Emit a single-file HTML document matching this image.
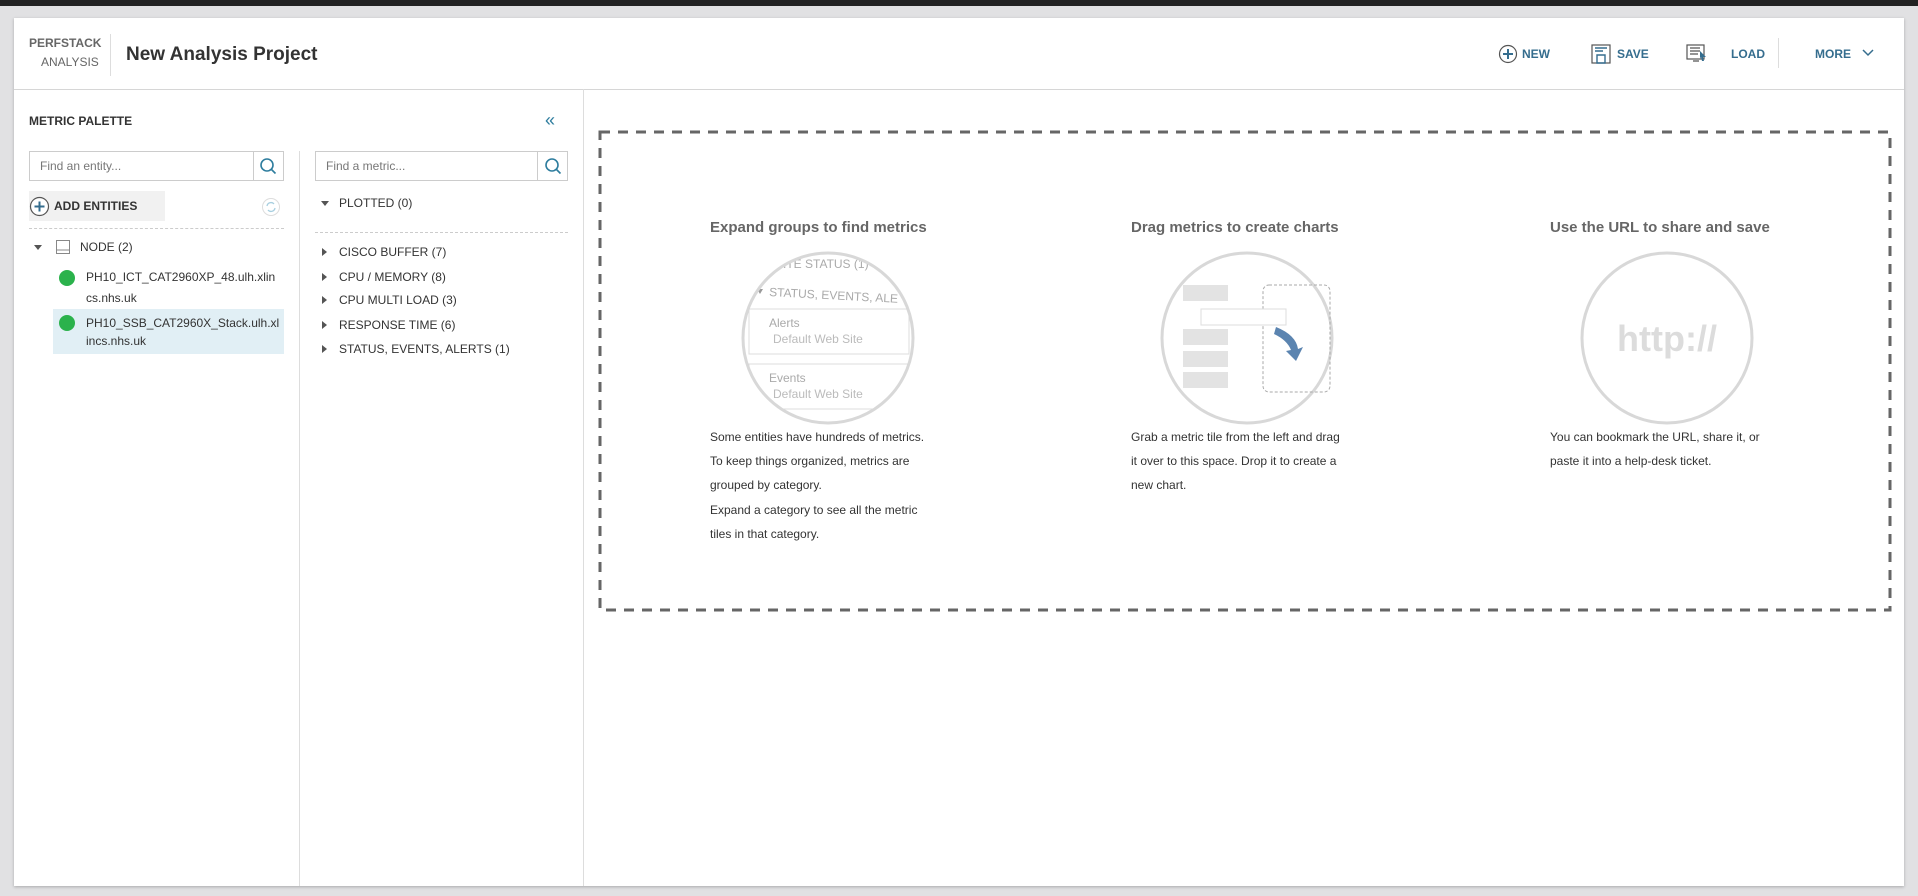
<!DOCTYPE html>
<html><head><meta charset="utf-8">
<style>
*{margin:0;padding:0;box-sizing:border-box}
body{width:1918px;height:896px;background:#e1e1e3;font-family:"Liberation Sans",Arial,sans-serif;position:relative;overflow:hidden;color:#333}
.a{position:absolute;white-space:nowrap}
.bar{position:absolute;left:0;top:0;width:1918px;height:6px;background:#222}
.card{position:absolute;left:14px;top:18px;width:1890px;height:868px;background:#fff;box-shadow:0 1px 3px rgba(0,0,0,.25)}
.t12{font-size:12px}
.btn{font-size:12px;font-weight:bold;color:#356d8e}
.srch{position:absolute;height:30px;border:1px solid #ccc;background:#fff}
.srch span{position:absolute;left:10px;top:7px;font-size:12px;color:#777}
.srch i{position:absolute;right:0;top:0;width:30px;height:28px;border-left:1px solid #ccc}
.tri-r{width:0;height:0;border-top:4px solid transparent;border-bottom:4px solid transparent;border-left:5px solid #555}
.tri-d{width:0;height:0;border-left:4px solid transparent;border-right:4px solid transparent;border-top:5px solid #555}
.dot{position:absolute;width:16px;height:16px;border-radius:50%;background:#2bb24c}
.h{font-size:15px;font-weight:bold;color:#666}
.p{font-size:12px;color:#333;line-height:24px;white-space:normal}
</style></head><body>
<div class="bar"></div>
<div class="card"></div>
<div class="a" style="left:29px;top:36px;font-size:12px;font-weight:bold;color:#666">PERFSTACK</div>
<div class="a" style="left:41px;top:55px;font-size:12px;color:#666">ANALYSIS</div>
<div class="a" style="left:110px;top:34px;width:1px;height:42px;background:#ddd"></div>
<div class="a" style="left:126px;top:44px;font-size:19px;font-weight:bold;color:#333">New Analysis Project</div>
<div class="a" style="left:14px;top:89px;width:1890px;height:1px;background:#d6d6d6"></div>
<svg class="a" style="left:1498px;top:44px" width="20" height="20"><circle cx="10" cy="10" r="8.5" fill="none" stroke="#555" stroke-width="1.2"/><path d="M10 5v10M5 10h10" stroke="#356d8e" stroke-width="2"/></svg>
<div class="a btn" style="left:1522px;top:47px">NEW</div>
<svg class="a" style="left:1591px;top:44px" width="20" height="20"><rect x="1" y="1" width="18" height="18" fill="none" stroke="#555" stroke-width="1.2"/><path d="M4 4h12M4 7h8M6 11h8v8H6z" fill="none" stroke="#356d8e" stroke-width="1.4"/></svg>
<div class="a btn" style="left:1617px;top:47px">SAVE</div>
<svg class="a" style="left:1686px;top:44px" width="22" height="20"><rect x="1" y="1" width="17" height="14" fill="none" stroke="#555" stroke-width="1.2"/><path d="M4 4h10M4 7h10M4 10h8M7 17h6" stroke="#555" stroke-width="1.2"/><path d="M14 7l6 6-3 0 1 4-2 0-1-4-1 2z" fill="#356d8e"/></svg>
<div class="a btn" style="left:1731px;top:47px">LOAD</div>
<div class="a" style="left:1778px;top:38px;width:1px;height:30px;background:#ddd"></div>
<div class="a btn" style="left:1815px;top:47px">MORE</div>
<svg class="a" style="left:1862px;top:49px" width="12" height="8"><path d="M1 1l5 5 5-5" fill="none" stroke="#356d8e" stroke-width="1.5"/></svg>
<div class="a" style="left:583px;top:89px;width:1px;height:797px;background:#ddd"></div>
<div class="a" style="left:29px;top:114px;font-size:12px;font-weight:bold;color:#333">METRIC PALETTE</div>
<div class="a" style="left:545px;top:110px;font-size:18px;color:#2e7d9e">«</div>
<div class="srch" style="left:29px;top:151px;width:255px"><span>Find an entity...</span><i></i></div>
<svg class="a" style="left:259px;top:157px" width="18" height="18"><circle cx="8" cy="8" r="6" fill="none" stroke="#2e7d9e" stroke-width="1.6"/><path d="M12.5 12.5l4 4" stroke="#2e7d9e" stroke-width="1.6"/></svg>
<div class="a" style="left:299px;top:151px;width:1px;height:735px;background:#ddd"></div>
<div class="srch" style="left:315px;top:151px;width:253px"><span>Find a metric...</span><i></i></div>
<svg class="a" style="left:544px;top:157px" width="18" height="18"><circle cx="8" cy="8" r="6" fill="none" stroke="#2e7d9e" stroke-width="1.6"/><path d="M12.5 12.5l4 4" stroke="#2e7d9e" stroke-width="1.6"/></svg>
<div class="a" style="left:29px;top:191px;width:136px;height:30px;background:#f1f1f1"></div>
<svg class="a" style="left:29px;top:196px" width="21" height="21"><circle cx="10.5" cy="10.5" r="9" fill="#fff" stroke="#555" stroke-width="1.2"/><path d="M10.5 5.5v10M5.5 10.5h10" stroke="#356d8e" stroke-width="2"/></svg>
<div class="a" style="left:54px;top:199px;font-size:12px;font-weight:bold;color:#333">ADD ENTITIES</div>
<svg class="a" style="left:261px;top:197px" width="20" height="20"><circle cx="10" cy="10" r="8.5" fill="none" stroke="#ddd" stroke-width="1"/><path d="M6 9a4 4 0 0 1 7-2M14 11a4 4 0 0 1-7 2" fill="none" stroke="#a8cfe0" stroke-width="1.3"/></svg>
<div class="a" style="left:29px;top:228px;width:255px;border-top:1px dashed #ccc"></div>
<div class="a tri-d" style="left:34px;top:245px"></div>
<svg class="a" style="left:56px;top:240px" width="14" height="14"><rect x=".5" y=".5" width="13" height="13" fill="none" stroke="#888"/><path d="M1 10h12" stroke="#888"/></svg>
<div class="a t12" style="left:80px;top:240px">NODE (2)</div>
<div class="dot" style="left:59px;top:270px"></div>
<div class="a t12" style="left:86px;top:270px">PH10_ICT_CAT2960XP_48.ulh.xlin</div>
<div class="a t12" style="left:86px;top:291px">cs.nhs.uk</div>
<div class="a" style="left:53px;top:309px;width:231px;height:45px;background:#e1eff5"></div>
<div class="dot" style="left:59px;top:315px"></div>
<div class="a t12" style="left:86px;top:316px">PH10_SSB_CAT2960X_Stack.ulh.xl</div>
<div class="a t12" style="left:86px;top:334px">incs.nhs.uk</div>
<div class="a tri-d" style="left:321px;top:201px"></div>
<div class="a t12" style="left:339px;top:196px">PLOTTED (0)</div>
<div class="a" style="left:315px;top:232px;width:253px;border-top:1px dashed #ccc"></div>
<div class="a tri-r" style="left:322px;top:248px"></div><div class="a t12" style="left:339px;top:245px">CISCO BUFFER (7)</div>
<div class="a tri-r" style="left:322px;top:273px"></div><div class="a t12" style="left:339px;top:270px">CPU / MEMORY (8)</div>
<div class="a tri-r" style="left:322px;top:296px"></div><div class="a t12" style="left:339px;top:293px">CPU MULTI LOAD (3)</div>
<div class="a tri-r" style="left:322px;top:321px"></div><div class="a t12" style="left:339px;top:318px">RESPONSE TIME (6)</div>
<div class="a tri-r" style="left:322px;top:345px"></div><div class="a t12" style="left:339px;top:342px">STATUS, EVENTS, ALERTS (1)</div>
<svg class="a" style="left:598px;top:130px" width="1294" height="482"><rect x="2" y="2" width="1290" height="478" fill="none" stroke="#666" stroke-width="3" stroke-dasharray="10 8"/></svg>
<div class="a h" style="left:710px;top:219px">Expand groups to find metrics</div>
<div class="a h" style="left:1131px;top:219px">Drag metrics to create charts</div>
<div class="a h" style="left:1550px;top:219px">Use the URL to share and save</div>
<svg class="a" style="left:739px;top:249px" width="178" height="178">
<defs><clipPath id="c1"><circle cx="89" cy="89" r="85"/></clipPath></defs>
<g clip-path="url(#c1)" font-family="Liberation Sans,sans-serif" fill="#aaa">
<text x="36" y="19" font-size="12">SITE STATUS (1)</text>
<path d="M18 40l6 0-3 5z" fill="#999"/>
<text x="30" y="47" font-size="12" transform="rotate(3 30 47)">STATUS, EVENTS, ALE</text>
<rect x="10" y="60" width="160" height="45" fill="none" stroke="#ddd"/>
<text x="30" y="78" font-size="12">Alerts</text>
<text x="34" y="94" font-size="12" fill="#bbb">Default Web Site</text>
<rect x="10" y="115" width="160" height="45" fill="none" stroke="#ddd"/>
<text x="30" y="133" font-size="12">Events</text>
<text x="34" y="149" font-size="12" fill="#bbb">Default Web Site</text>
</g>
<circle cx="89" cy="89" r="85" fill="none" stroke="#d8d8d8" stroke-width="3"/></svg>
<svg class="a" style="left:1158px;top:249px" width="178" height="178">
<circle cx="89" cy="89" r="85" fill="none" stroke="#d8d8d8" stroke-width="3"/>
<rect x="25" y="36" width="45" height="16" fill="#e3e3e3"/>
<rect x="25" y="80" width="45" height="16" fill="#e3e3e3"/>
<rect x="25" y="102" width="45" height="16" fill="#e3e3e3"/>
<rect x="25" y="123" width="45" height="16" fill="#e3e3e3"/>
<rect x="105" y="36" width="67" height="107" rx="6" fill="none" stroke="#aaa" stroke-dasharray="3 2"/>
<rect x="43" y="60" width="85" height="16" fill="#fff" stroke="#ddd"/>
<path d="M118 78q20 8 22 22l5-2-7 14-10-10 5-1q-4-10-17-16z" fill="#5b84b0"/></svg>
<svg class="a" style="left:1578px;top:249px" width="178" height="178">
<circle cx="89" cy="89" r="85" fill="none" stroke="#d8d8d8" stroke-width="3"/>
<text x="89" y="102" text-anchor="middle" font-family="Liberation Sans,sans-serif" font-size="36" font-weight="bold" fill="#dcdcdc">http://</text></svg>
<div class="a p" style="left:710px;top:425px;width:228px">Some entities have hundreds of metrics. To keep things organized, metrics are grouped by category.</div>
<div class="a p" style="left:710px;top:498px;width:228px">Expand a category to see all the metric tiles in that category.</div>
<div class="a p" style="left:1131px;top:425px;width:214px">Grab a metric tile from the left and drag it over to this space. Drop it to create a new chart.</div>
<div class="a p" style="left:1550px;top:425px;width:240px">You can bookmark the URL, share it, or paste it into a help-desk ticket.</div>
</body></html>
